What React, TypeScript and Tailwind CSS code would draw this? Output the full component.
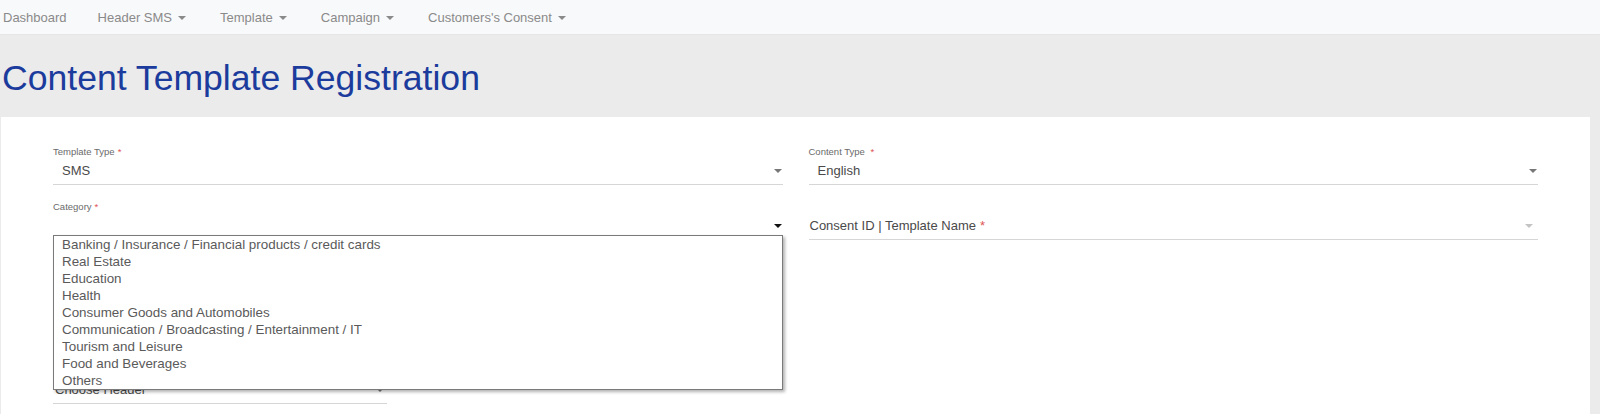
const navItems = [
  { label: 'Dashboard', menu: false },
  { label: 'Header SMS', menu: true },
  { label: 'Template', menu: true },
  { label: 'Campaign', menu: true },
  { label: "Customers's Consent", menu: true },
];

const categories = [
  'Banking / Insurance / Financial products / credit cards',
  'Real Estate',
  'Education',
  'Health',
  'Consumer Goods and Automobiles',
  'Communication / Broadcasting / Entertainment / IT',
  'Tourism and Leisure',
  'Food and Beverages',
  'Others',
];

function Caret({ color }: { color: string }) {
  return <span className={`inline-block h-0 w-0 border-x-[4px] border-t-[4px] border-x-transparent ${color}`} />;
}

function Label({ text }: { text: string }) {
  return (
    <div className="h-[12px] text-[9.5px] leading-[12px] text-[#6a6a6a]">
      {text}
      {text && <span className="ml-[3px] text-[#e05555]">*</span>}
    </div>
  );
}

export default function App() {
  return (
    <div className="min-h-screen bg-[#ebebeb] font-[Liberation_Sans,Arial,sans-serif]">
      {/* top nav */}
      <nav className="flex h-[35px] items-center gap-[34px] border-b border-[#e6e6e6] bg-[#f8f9fa] pl-[3px] pt-[2px] text-[13px] text-[#8a8a8a]">
        {navItems.map((item) => (
          <span key={item.label} className={item.menu ? 'flex items-center' : 'flex items-center -mr-[3px]'}>
            {item.label}
            {item.menu && (
              <span className="ml-[6px] flex">
                <Caret color="border-t-[#8a8a8a]" />
              </span>
            )}
          </span>
        ))}
      </nav>

      <div className="pt-[22px] pb-[18px] pl-[2px]">
        <h1 className="text-[35.6px] leading-[42px] text-[#1b3b9d]">Content Template Registration</h1>
      </div>

      <div className="ml-[1px] mr-[10px] bg-white px-[52px] pt-[29px] pb-10">
        <div className="grid grid-cols-2 gap-[26px]">
          {/* left column */}
          <div className="flex flex-col gap-4">
            <div>
              <Label text="Template Type" />
              <div className="flex h-[27px] items-center justify-between border-b border-[#d6d6d6] pl-[9px] pr-[1px] text-[13px] text-[#4a4a4a]">
                <span>SMS</span>
                <Caret color="border-t-[#777]" />
              </div>
            </div>

            <div className="relative">
              <Label text="Category" />
              <div className="flex h-[27px] items-center justify-end border-b border-[#d6d6d6] pr-[1px]">
                <Caret color="border-t-[#111]" />
              </div>
              <ul className="absolute left-0 right-0 top-[34px] z-10 border border-[#7a7a7a] bg-white pl-[8px] text-[13.4px] leading-[17px] text-[#5a5a5a] shadow-[2px_2px_3px_rgba(0,0,0,0.3)]">
                {categories.map((c) => (
                  <li key={c}>{c}</li>
                ))}
              </ul>
            </div>

            {/* fields covered by the open list */}
            <div className="w-[334px]">
              <Label text="" />
              <div className="h-[27px] border-b border-[#d6d6d6]" />
            </div>

            <div className="w-[334px]">
              <Label text="" />
              <div className="h-[26px]" />
            </div>

            <div className="w-[334px]">
              <Label text="" />
              <div className="flex h-[27px] items-center justify-between border-b border-[#d6d6d6] pl-[2px] pr-[3px] text-[13px] text-[#4a4a4a]">
                <span>Choose Header</span>
                <Caret color="border-t-[#777]" />
              </div>
            </div>
          </div>

          {/* right column */}
          <div className="flex flex-col gap-4">
            <div>
              <Label text="Content Type " />
              <div className="flex h-[27px] items-center justify-between border-b border-[#d6d6d6] pl-[9px] pr-[1px] text-[13px] text-[#4a4a4a]">
                <span>English</span>
                <Caret color="border-t-[#777]" />
              </div>
            </div>

            <div>
              <Label text="" />
              <div className="flex h-[27px] items-center justify-between border-b border-[#d6d6d6] pl-[1px] pr-[5px] text-[13px] text-[#4a4a4a]">
                <span>
                  Consent ID | Template Name<span className="ml-[4px] text-[#e05555]">*</span>
                </span>
                <Caret color="border-t-[#c4c4c4]" />
              </div>
            </div>
          </div>
        </div>
      </div>
    </div>
  );
}
